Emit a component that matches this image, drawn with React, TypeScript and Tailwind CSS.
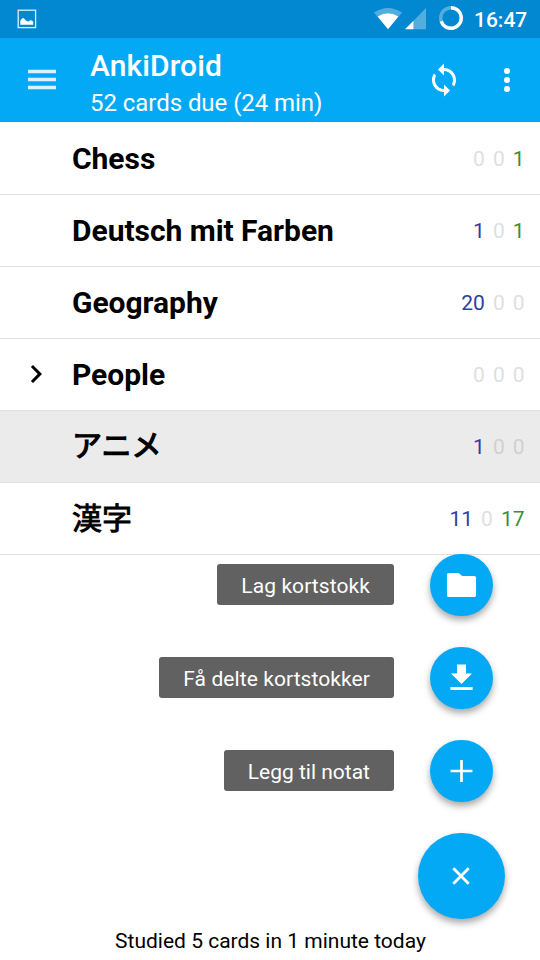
import React from "react";

type Deck = { name: string; counts: [number, number, number]; expandable?: boolean; selected?: boolean; nameStyle?: string };

const decks: Deck[] = [
  { name: "Chess", counts: [0, 0, 1] },
  { name: "Deutsch mit Farben", counts: [1, 0, 1] },
  { name: "Geography", counts: [20, 0, 0] },
  { name: "People", counts: [0, 0, 0], expandable: true },
  {
    name: "アニメ",
    counts: [1, 0, 0],
    selected: true,
    nameStyle: "font-normal pb-px [-webkit-text-stroke:1.2px_black] [stroke-linejoin:round]",
  },
  { name: "漢字", counts: [11, 0, 17], nameStyle: "font-normal [-webkit-text-stroke:0.9px_black]" },
];

const countColors = ["text-[#303f9f]", "text-[#c62828]", "text-[#388e3c]"];

function StatusBar() {
  return (
    <div className="flex h-[38px] items-center bg-[#0288d1] pl-[17px] pr-3 text-white">
      <svg width="20" height="20" viewBox="0 0 20 20">
        <rect x="1.2" y="1.2" width="17.4" height="17.4" fill="none" stroke="#fff" strokeOpacity=".85" strokeWidth="1.3" />
        <path d="M3.300 15.800V11.800l1.700-2.300 1.500-.5L9.500 12l2 .4 1.500-1.200 1.800 .4 1.400 1.200v3z" fill="#fff" />
      </svg>
      <div className="ml-auto flex items-center">
        <svg width="28" height="22" viewBox="0 0 28 22">
          <path d="M0 4.500Q14-4.500 28 4.500L24.500 8.600Q14 2 3.500 8.600z" fill="#fff" fillOpacity=".32" />
          <path d="M3.500 8.600Q14 2 24.500 8.600L14 21.200z" fill="#fff" />
        </svg>
        <svg className="ml-[3px]" width="21" height="22" viewBox="0 0 21 22">
          <path d="M8.500 12.700L21 0v21.200H8.500z" fill="#fff" fillOpacity=".32" />
          <path d="M0 21.200L8.500 12.700v8.500z" fill="#fff" />
        </svg>
        <svg className="mb-[2px] ml-[13px]" width="24" height="24" viewBox="0 0 24 24">
          <circle cx="12" cy="12" r="10.300" fill="none" stroke="#fff" strokeOpacity=".32" strokeWidth="3.400" />
          <path d="M12 1.700A10.300 10.300 0 1 1 2.200 15.200" fill="none" stroke="#fff" strokeWidth="3.400" />
        </svg>
        <span className="ml-[11px] w-[54px] whitespace-nowrap pt-px text-[21px] font-medium leading-6">16:47</span>
      </div>
    </div>
  );
}

function Toolbar() {
  return (
    <header className="flex h-[84px] items-center bg-[#03a9f4] text-white">
      <svg className="ml-7" width="28" height="22" viewBox="0 0 28 22">
        <path d="M0 2.500h28M0 10.500h28M0 18.500h28" stroke="#fff" strokeWidth="3.300" strokeOpacity=".85" />
      </svg>
      <div className="ml-[34px] flex-1 pt-[7px]">
        <h1 className="text-[30px] font-medium leading-9 tracking-[0.1px]">AnkiDroid</h1>
        <p className="mt-[3px] text-[24px] leading-8 tracking-[-0.05px]">52 cards due (24 min)</p>
      </div>
      <svg className="mr-[27px]" width="36" height="36" viewBox="0 0 24 24" fill="#fff">
        <path d="M12 4V1L8 5l4 4V6c3.310 0 6 2.690 6 6 0 1.010-.25 1.970-.7 2.800l1.460 1.460C19.540 15.030 20 13.570 20 12c0-4.420-3.580-8-8-8zm0 14c-3.310 0-6-2.690-6-6 0-1.010.25-1.970.7-2.800L5.240 7.740C4.460 8.970 4 10.430 4 12c0 4.420 3.580 8 8 8v3l4-4-4-4v3z" />
      </svg>
      <svg className="mr-[15px]" width="36" height="36" viewBox="0 0 24 24" fill="#fff">
        <circle cx="12" cy="6" r="2" />
        <circle cx="12" cy="12" r="2" />
        <circle cx="12" cy="18" r="2" />
      </svg>
    </header>
  );
}

function DeckRow({ deck }: { deck: Deck }) {
  return (
    <li className={`flex h-[72px] items-center border-b border-[#e0e0e0] pr-[15.5px] ${deck.selected ? "bg-[#ebebeb]" : ""}`}>
      <div className="flex w-[72px] justify-center pb-[2px]">
        {deck.expandable && (
          <svg width="36" height="36" viewBox="0 0 24 24">
            <path d="M8.590 16.590L13.170 12 8.590 7.410 10 6l6 6-6 6z" fill="#000" />
          </svg>
        )}
      </div>
      <span className={`flex-1 whitespace-nowrap text-[30px] leading-9 text-black ${deck.nameStyle ?? "font-bold tracking-[-0.03px]"}`}>
        {deck.name}
      </span>
      <div className="flex gap-2 pt-[2px] text-[21px]">
        {deck.counts.map((n, i) => (
          <span key={i} className={n === 0 ? (deck.selected ? "text-[#d0d0d0]" : "text-[#e0e0e0]") : countColors[i]}>
            {n}
          </span>
        ))}
      </div>
    </li>
  );
}

function MenuAction({ label, path, tracking }: { label: string; path: string; tracking: string }) {
  return (
    <div className="flex h-[62px] items-center gap-9 pr-3">
      <span
        className={`mb-px flex h-[41px] items-center whitespace-nowrap rounded-[3px] bg-[#616161] px-6 pt-[2px] text-[21px] leading-[30px] text-white ${tracking}`}
      >
        {label}
      </span>
      <button className="flex h-[62px] w-[63px] items-center justify-center rounded-full bg-[#03a9f4] shadow-[0_4px_7px_rgba(0,0,0,0.35)]">
        <svg width="37" height="36" viewBox="-0.333 0 24.667 24" fill="#fff">
          <path d={path} />
        </svg>
      </button>
    </div>
  );
}

function ActionMenu() {
  return (
    <div className="absolute right-[35px] top-[554px] flex flex-col items-end gap-[31px]">
      <MenuAction
        label="Lag kortstokk"
        tracking="tracking-[0.08px]"
        path="M10 4H3.500C2.700 4 2.300 4.500 2.300 5.200V18.800c0 .7.5 1.200 1.200 1.200h17c.7 0 1.200-.5 1.200-1.200V7.200c0-.7-.5-1.200-1.200-1.200h-8z"
      />
      <MenuAction label="Få delte kortstokker" tracking="tracking-[0.08px]" path="M19 9h-4V3H9v6H5l7 7 7-7zM4.600 18v2h14.800v-2H4.600z" />
      <MenuAction
        label="Legg til notat"
        tracking="tracking-normal"
        path="M19.300 12.900h-6.400v6.400h-1.800v-6.400H4.700v-1.800h6.400V4.700h1.800v6.400h6.400z"
      />
      <button className="flex h-[86px] w-[87px] items-center justify-center rounded-full bg-[#03a9f4] pr-[2px] shadow-[0_4px_7px_rgba(0,0,0,0.35)]">
        <svg width="18" height="18" viewBox="0 0 18 18">
          <path d="M1.300 1.300l15.400 15.400M16.700 1.300l-15.400 15.400" stroke="#fff" strokeWidth="2.800" />
        </svg>
      </button>
    </div>
  );
}

export default function App() {
  return (
    <div className="relative flex h-[960px] w-[540px] flex-col overflow-hidden bg-white font-[Roboto,'Noto_Sans_CJK_JP',sans-serif]">
      <StatusBar />
      <Toolbar />
      <ul className="pt-px">
        {decks.map((d) => (
          <DeckRow key={d.name} deck={d} />
        ))}
      </ul>
      <ActionMenu />
      <p className="mb-[6px] mt-auto pl-px text-center text-[21px] leading-[26px] text-black">Studied 5 cards in 1 minute today</p>
    </div>
  );
}
